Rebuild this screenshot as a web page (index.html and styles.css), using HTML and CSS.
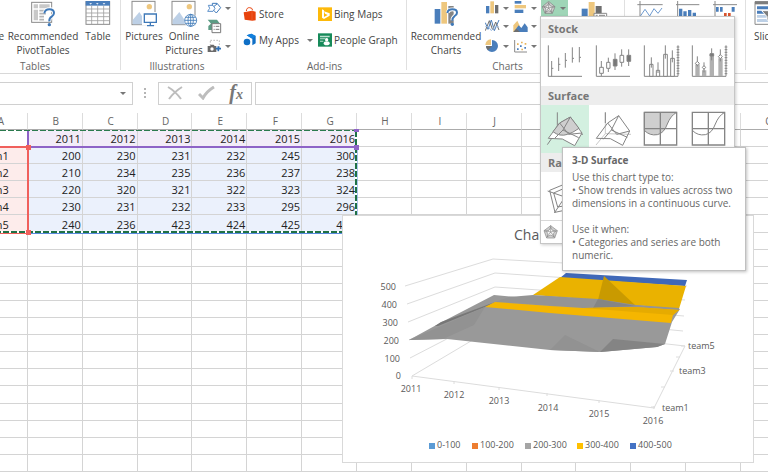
FILE: index.html
```html
<!DOCTYPE html>
<html lang="en">
<head>
    <meta charset="UTF-8">
    <meta name="viewport" content="width=device-width, initial-scale=1.0">
    <title>Workbook</title>
    <link rel="stylesheet" href="styles.css">
</head>
<body>
    <header class="ribbon">
        <section class="group tables">
            <div class="group-body">
                <button class="big pivot"><svg width="28" height="28"></svg>PivotTable</button>
                <button class="big wide">
                    <svg width="28" height="28" viewBox="92 0 84 84">
                        <rect x="100" y="7" width="60" height="60" fill="#fff" stroke="#8a8a8a" stroke-width="3"/>
                        <path d="M106 13h13v12h-13zM123 13h31v12h-31zM106 29h13v32h-13z" fill="#c8c8c8"/>
                        <path d="M123 32h24M123 41h20M123 50h14M123 59h14" stroke="#b5b5b5" stroke-width="5"/>
                        <path d="M139 39q3-11 15-11 13 0 13 11 0 6-7 11-8 5-7 13" fill="none" stroke="#fff" stroke-width="12"/>
                        <path d="M138 40q2-12 15-12 14 0 14 11 0 6-7 11-8 5-7 14" fill="none" stroke="#3f79b8" stroke-width="6"/>
                        <circle cx="153" cy="74" r="5" fill="#3f79b8"/>
                    </svg>
                    Recommended PivotTables
                </button>
                <button class="big narrow">
                    <svg width="28" height="28" viewBox="254 0 84 84">
                        <rect x="260" y="5" width="71" height="68" fill="#fff" stroke="#8a8a8a" stroke-width="3"/>
                        <path d="M259 3h73v14h-73z" fill="#4a7ebb"/>
                        <path d="M260 27h71M260 39h71M260 50h71M260 62h71M277 17v56M295 17v56M313 17v56" stroke="#a0a0a0" stroke-width="2.5"/>
                        <path d="M270 9l8 0-4 5zM290 9l8 0-4 5zM310 9l8 0-4 5z" fill="#dbe6f3"/>
                    </svg>
                    Table
                </button>
            </div>
            <h2>Tables</h2>
        </section>

        <section class="group illustrations">
            <div class="group-body">
                <button class="big">
                    <svg width="28" height="28" viewBox="391 0 84 84">
                        <rect x="397" y="4" width="69" height="70" fill="#fff" stroke="#8a8a8a" stroke-width="3"/>
                        <path d="M399 73V60l20-24 24 37z" fill="#bdd0e6"/>
                        <circle cx="449" cy="20" r="8" fill="#eec77e"/>
                        <path d="M427 36h48v40h-48z" fill="#fff"/>
                        <path d="M434 42h36v25h-36zM452 68v8M442 77h21" fill="#fff" stroke="#3f79b8" stroke-width="4"/>
                    </svg>
                    Pictures
                </button>
                <button class="big">
                    <svg width="28" height="28" viewBox="512 0 84 84">
                        <rect x="518" y="4" width="69" height="70" fill="#fff" stroke="#8a8a8a" stroke-width="3"/>
                        <path d="M520 73V60l20-24 24 37z" fill="#bdd0e6"/>
                        <circle cx="570" cy="20" r="8" fill="#eec77e"/>
                        <circle cx="574" cy="61" r="20" fill="#fff"/>
                        <g fill="none" stroke="#3f79b8" stroke-width="2.5">
                            <circle cx="574" cy="61" r="18"/>
                            <ellipse cx="574" cy="61" rx="8" ry="18"/>
                            <path d="M574 43v36M556 61h36M559 52h30M559 70h30"/>
                        </g>
                    </svg>
                    Online Pictures
                </button>
                <div class="stack">
                    <button class="small" aria-label="Shapes">
                        <svg width="15" height="13" viewBox="620 0 45 39">
                            <path d="M636 4h14v12h-14z" fill="#fff" stroke="#3f79b8" stroke-width="3"/>
                            <path d="M651 5l10 12-13 16-14-14z" fill="#fff" stroke="#3f79b8" stroke-width="3"/>
                            <path d="M624 10h14l6 9-6 9h-16l6-9z" fill="#fff" stroke="#5b8fc9" stroke-width="3"/>
                        </svg>
                        <i class="caret"></i>
                    </button>
                    <button class="small" aria-label="SmartArt">
                        <svg width="15" height="15" viewBox="620 55 45 45">
                            <path d="M622 57h28l9 12h-24v19h-11V76l8-7z" fill="#5c9c84"/>
                            <path d="M635 69h26v27h-26z" fill="#fff" stroke="#7a7a7a" stroke-width="3"/>
                            <path d="M640 77h3M646 77h11M640 86h3M646 86h11" stroke="#7a7a7a" stroke-width="3"/>
                        </svg>
                    </button>
                    <button class="small" aria-label="Screenshot">
                        <svg width="15" height="14" viewBox="620 120 45 42">
                            <path d="M630 124h27v26h-27z" fill="none" stroke="#9a9a9a" stroke-width="2" stroke-dasharray="5 4"/>
                            <path d="M622 141h7l3-4h8l3 4h5v18h-26z" fill="#6a6a6a"/>
                            <circle cx="635" cy="150" r="5" fill="#fff"/>
                            <path d="M654 142v15M646 149h16" stroke="#2e6fb5" stroke-width="5"/>
                        </svg>
                        <i class="caret"></i>
                    </button>
                </div>
            </div>
            <h2>Illustrations</h2>
        </section>

        <section class="group addins">
            <div class="group-body addin-grid">
                <button class="addin">
                    <svg width="14" height="14" viewBox="40 17 42 42">
                        <path d="M50 29q1-11 10-10 8 0 9 8" fill="none" stroke="#e8430c" stroke-width="3"/>
                        <path d="M42 33l25-5 11 3v26l-10 1-23-3z" fill="#e8430c"/>
                        <path d="M67 28v30" stroke="#f38a66"/>
                    </svg>
                    Store
                </button>
                <button class="addin">
                    <svg width="14" height="14" viewBox="267 17 42 42">
                        <path d="M267 18h42v41h-42z" fill="#fdb90a"/>
                        <path d="M279 24l6 3v20l11-6-8-4-3-7 17 6v7l-17 10-6-4z" fill="#fff"/>
                    </svg>
                    Bing Maps
                </button>
                <button class="addin">
                    <svg width="14" height="14" viewBox="40 99 42 42">
                        <path d="M51 106l14-5 13 7v22l-10 6V116z" fill="#0f6fc6"/>
                        <path d="M51 106l14-5 13 7-10 8z" fill="#1280de"/>
                        <circle cx="52" cy="126" r="10" fill="#0f6fc6"/>
                        <path d="M62 117q6 8 0 18" fill="none" stroke="#fff" stroke-width="2"/>
                    </svg>
                    My Apps
                    <i class="caret"></i>
                </button>
                <button class="addin">
                    <svg width="14" height="14" viewBox="267 98 42 42">
                        <path d="M267 99h42v40h-42z" fill="#178a5a"/>
                        <path d="M273 106h29v5h-29zM273 114h16v3h-16zM273 121h10v3h-10z" fill="#bfe0d1"/>
                        <circle cx="293" cy="118" r="5" fill="#fff"/>
                        <ellipse cx="293" cy="129" rx="9" ry="6" fill="#fff"/>
                    </svg>
                    People Graph
                </button>
            </div>
            <h2>Add-ins</h2>
        </section>

        <section class="group charts">
            <div class="group-body">
                <button class="big wide">
                    <svg width="28" height="28" viewBox="612 0 84 84">
                        <path d="M620 27h17v44h-17z" fill="#4a7ebb"/>
                        <path d="M640 6h17v65h-17z" fill="#eec77e"/>
                        <path d="M661 18h16v53h-16z" fill="#848484"/>
                        <path d="M659 38q2-10 14-10 13 0 13 10 0 6-6 10-7 5-7 13" fill="none" stroke="#fff" stroke-width="11"/>
                        <path d="M658 39q2-11 15-11 14 0 14 10 0 6-7 10-7 5-7 14" fill="none" stroke="#3f79b8" stroke-width="6"/>
                        <circle cx="673" cy="73" r="5" fill="#3f79b8"/>
                    </svg>
                    Recommended Charts
                </button>
                <div class="stack chart-col">
                    <button class="small" aria-label="Column chart">
                        <svg width="15" height="14" viewBox="18 -3 45 42">
                            <path d="M21 12h10v22H21z" fill="#4a7ebb"/><path d="M34-2h11v36H34z" fill="#eec77e"/><path d="M48 9h10v25H48z" fill="#6e6e6e"/>
                        </svg>
                        <i class="caret"></i>
                    </button>
                    <button class="small" aria-label="Line chart">
                        <svg width="15" height="14" viewBox="18 57 45 42" fill="none" stroke-width="3">
                            <path d="M19 68l8 20 10-28 9 32 14-32" stroke="#4a7ebb"/><path d="M19 92l12-30 10 28 9-24 10 24" stroke="#6e6e6e"/><path d="M19 80l9 0 9 12 12-14 11 3" stroke="#9dbbe0"/>
                        </svg>
                        <i class="caret"></i>
                    </button>
                    <button class="small" aria-label="Pie chart">
                        <svg width="15" height="14" viewBox="18 114 45 42">
                            <path d="M39 117a18 18 0 1 1-18 18h18z" fill="#4a7ebb"/><path d="M36 132H19q1-15 17-17z" fill="#eec77e"/><path d="M39 135H21q0 8 6 13z" fill="#6e6e6e"/>
                        </svg>
                        <i class="caret"></i>
                    </button>
                </div>
                <div class="stack chart-col">
                    <button class="small" aria-label="Bar chart">
                        <svg width="15" height="14" viewBox="102 -3 45 42">
                            <path d="M107-3h20v8h-20z" fill="#4a7ebb"/><path d="M107 9h34v10h-34z" fill="#eec77e"/><path d="M107 23h26v10h-26z" fill="#4a7ebb"/>
                        </svg>
                        <i class="caret"></i>
                    </button>
                    <button class="small" aria-label="Area chart">
                        <svg width="15" height="14" viewBox="102 57 45 42">
                            <path d="M103 96V76l12-14 16 34z" fill="#eec77e"/><path d="M104 96l15-20 8 8 10-14 9 12v14z" fill="#4a7ebb"/><path d="M103 96l9-10 11 10z" fill="#6e6e6e"/>
                        </svg>
                        <i class="caret"></i>
                    </button>
                    <button class="small" aria-label="Scatter chart">
                        <svg width="15" height="14" viewBox="102 114 45 42">
                            <path d="M107 117v36h37" fill="none" stroke="#8a8a8a" stroke-width="3"/><path d="M114 142h5v5h-5zM123 133h5v5h-5zM136 138h5v5h-5z" fill="#4a7ebb"/><path d="M114 127h5v5h-5zM126 122h5v5h-5zM137 126h5v5h-5zM127 143h5v5h-5z" fill="#e8b45a"/>
                        </svg>
                        <i class="caret"></i>
                    </button>
                </div>
                <div class="dropdown">
                    <button class="small open" aria-label="Stock, surface or radar chart">
                        <svg width="16" height="14" viewBox="186 -3 48 42" stroke="#7d7d7d" stroke-width="2">
                            <path d="M209-2l19 16-8 20h-22l-8-20z" fill="#cfcfcf"/><path d="M209 3l5 9 10 2-7 7 2 10-10-5-10 5 2-10-7-7 10-2z" fill="#f2f2f2"/><path d="M209 0v18l19-4M209 18l11 16M209 18l-11 16M209 18l-19-4" fill="none"/>
                        </svg>
                        <i class="caret"></i>
                    </button>

                    <div class="menu">
                        <h3>Stock</h3>
                        <div class="menu-row">
                            <button aria-label="High-Low-Close">
                                <svg viewBox="18 69 144 144"><path d="M40 91v93h101M50 138v46M71 128v40M91 114v44M112 97v46M133 96v46M50 160h5M71 148h5M91 136h5M112 130h5M133 127h5"/></svg>
                            </button>
                            <button aria-label="Open-High-Low-Close">
                                <svg viewBox="162 69 144 144"><path d="M184 91v93h101M199 138v18M199 175v8M220 128v14M220 161v10M240 115v50M260 103v18M260 142v13M281 103v50"/><path class="hollow" d="M194 157h11v18h-11zM215 142h10v18h-10zM255 121h11v21h-11z"/><path class="solid" d="M235 133h11v20h-11zM276 121h11v18h-11z"/></svg>
                            </button>
                            <button aria-label="Volume-High-Low-Close">
                                <svg viewBox="306 69 144 144"><path d="M328 91v93h101"/><path d="M429 91v93M425 96h8M425 104h8M425 112h8M425 120h8M425 128h8M425 136h8M425 144h8M425 152h8M425 160h8M425 168h8M425 176h8"/><path class="hollow" d="M344 148h10v36h-10zM364 166h10v18h-10zM386 118h11v66h-11zM407 130h11v54h-11z"/><path d="M349 127v31M369 142v32M391 91v40M412 106v36"/></svg>
                            </button>
                            <button aria-label="Volume-Open-High-Low-Close">
                                <svg viewBox="450 69 144 144"><path d="M472 91v93h101M573 91v93M569 96h8M569 104h8M569 112h8M569 120h8M569 128h8M569 136h8M569 144h8M569 152h8M569 160h8M569 168h8M569 176h8"/><path class="bar" d="M481 148h13v36h-13zM501 166h13v18h-13zM524 118h13v66h-13zM550 130h13v54h-13z"/><path d="M487 124v30M507 142v30M530 100v36M556 103v36"/><path class="hollow" d="M487 139l6 6-6 6-6-6zM507 152l5 5-5 6-5-6zM556 119l6 6-6 6-6-6z"/><path class="solid" d="M525 116h11v7h-11z"/></svg>
                            </button>
                        </div>
                        <h3>Surface</h3>
                        <div class="menu-row">
                            <button class="selected" aria-label="3-D Surface">
                                <svg viewBox="18 270 144 144"><path d="M67 292v54l-30 43M67 346l77 12"/><path class="hollow" d="M40 370l34-46 32-18 35 48-22 38-37-20z"/><path class="shade" d="M54 350l20-26 32-18 26 34q-20 14-34 18-24 8-44-8z"/><path d="M74 324l27 34 40-4M106 306L84 345l-24 24M84 345l47 23"/></svg>
                            </button>
                            <button aria-label="Wireframe 3-D Surface">
                                <svg viewBox="162 270 144 144"><path class="faint" d="M211 292v64l-28 34M211 356l77 2"/><path d="M211 292v32"/><path d="M184 370l34-46 33-22 33 46-21 43-37-20zM218 324l27 34 39-10M251 302l-22 43-24 28M229 345l48 22"/></svg>
                            </button>
                            <button aria-label="Contour">
                                <svg viewBox="306 270 144 144"><path class="shade" d="M328 292h97q-18 10-28 35-10 28-30 32-23 4-39-13z"/><path class="frame" d="M328 292h97v98h-97zM376 292v98M328 341h97"/></svg>
                            </button>
                            <button aria-label="Wireframe Contour">
                                <svg viewBox="450 270 144 144"><path d="M569 292q-18 10-28 35-10 28-30 32-23 4-39-13"/><path class="frame" d="M472 292h97v98h-97zM520 292v98M472 341h97"/></svg>
                            </button>
                        </div>
                        <h3>Radar</h3>
                        <div class="menu-row">
                            <button aria-label="Radar">
                                <svg viewBox="18 99 144 144"><path d="M92 134l50 24-16 48-66 14-16-66zM92 146l34 16-12 34-46 8-12-42zM90 134v40l50-16M90 174l34 32M90 174l-32 48M90 174l-52-18"/></svg>
                            </button>
                        </div>
                        <button class="more" aria-label="More charts">
                            <svg class="radar-mark" width="16" height="16" viewBox="24 254 48 48"><path class="shade" d="M47 259l20 15-8 22H35l-8-22z"/><path class="hollow" d="M47 264l5 9 10 2-7 7 2 10-10-5-10 5 2-10-7-7 10-2z"/><path d="M47 258v20l20-4M47 278l12 17M47 278l-12 17M47 278l-20-4"/></svg>
                        </button>
                        <div class="tooltip" role="tooltip">
                            <strong>3-D Surface</strong>
                            <p>Use this chart type to:<br>• Show trends in values across two dimensions in a continuous curve.</p>
                            <p>Use it when:<br>• Categories and series are both numeric.</p>
                        </div>
                    </div>
                </div>
                <button class="big pivot-chart" aria-label="PivotChart">
                    <svg width="28" height="28" viewBox="304 0 84 84">
                        <path d="M306 26h18v40h-18z" fill="#4a7ebb"/><path d="M327 6h18v60h-18z" fill="#eec77e"/><path d="M348 18h18v48h-18z" fill="#6e6e6e"/>
                        <path d="M343 40h38v34h-38z" fill="#fff" stroke="#8a8a8a" stroke-width="3"/>
                        <path d="M348 46h6M358 46h18" stroke="#8a8a8a" stroke-width="3"/>
                    </svg>
                </button>
            </div>
            <h2>Charts</h2>
        </section>

        <section class="group sparklines">
            <div class="group-body">
                <button class="big" aria-label="Line sparkline">
                    <svg width="28" height="28" viewBox="458 0 84 84" fill="none" stroke-width="3">
                        <path d="M462 14h76M470 3v75" stroke="#8a8a8a"/><path d="M470 50l15-22 14 20 13-22 12 14 12-16" stroke="#6f9bd0"/>
                    </svg>
                </button>
                <button class="big" aria-label="Column sparkline">
                    <svg width="28" height="28" viewBox="577 0 84 84">
                        <path d="M583 14h70M588 3v75" stroke="#8a8a8a" stroke-width="3"/><path d="M592 26h10v40h-10zM605 34h10v32h-10zM619 30h10v36h-10zM633 38h10v28h-10z" fill="#4a7ebb"/>
                    </svg>
                </button>
                <button class="big" aria-label="Win/loss sparkline">
                    <svg width="28" height="28" viewBox="693 0 84 84">
                        <path d="M696 14h72M702 3v75" stroke="#8a8a8a" stroke-width="3"/><path d="M705 21h8v14h-8zM717 21h8v14h-8zM752 21h9v14h-9z" fill="#4a7ebb"/><path d="M729 39h8v12h-8zM741 39h8v12h-8z" fill="#d9552f"/>
                    </svg>
                </button>
            </div>
        </section>

        <section class="group filters">
            <div class="group-body">
                <button class="big slicer">
                    <svg width="28" height="28" viewBox="825 0 84 84">
                        <path d="M828 5h66v68h-66z" fill="#fff" stroke="#8a8a8a" stroke-width="3"/><path d="M828 4h66v9h-66z" fill="#7d7d7d"/><path d="M834 19h54v9h-54zM834 32h54v9h-54z" fill="#4a7ebb"/><path d="M834 45h54v8h-54zM834 57h54v9h-54z" fill="#bdd0e6"/><path d="M848 32h40l-15 18v16l-9-7V50z" fill="#7d7d7d" stroke="#fff" stroke-width="3"/>
                    </svg>
                    Slicer
                </button>
            </div>
        </section>
    </header>

    <div class="formula-bar">
        <div class="name-box"><i class="caret"></i></div>
        <svg class="grip" width="3" height="10" viewBox="0 0 3 10"><path d="M0 0h2v2H0zM0 4h2v2H0zM0 8h2v2H0z" fill="#b5b5b5"/></svg>
        <div class="formula-tools">
            <button aria-label="Cancel"><svg width="16" height="14" viewBox="0 0 16 14"><path d="M1 1q7 4 13 12M15 1Q7 6 2 13" fill="none" stroke="#bdbdbd" stroke-width="2"/></svg></button>
            <button aria-label="Enter"><svg width="17" height="14" viewBox="0 0 17 14"><path d="M1 8l4 4Q9 5 16 1" fill="none" stroke="#bdbdbd" stroke-width="3"/></svg></button>
            <button class="fx" aria-label="Insert function">f<sub>x</sub></button>
        </div>
        <input class="formula" type="text" aria-label="Formula">
    </div>

    <main class="sheet">
        <table class="grid" id="grid"></table>

        <!-- coloured ranges of the selected chart and the copy marquee -->
        <svg class="ranges" width="362" height="124" viewBox="0 113 362 124">
            <path d="M28 233.5h329V148" fill="none" stroke="#5b8be0"/>
            <path d="M28 147V131M28 147h329" fill="none" stroke="#8e63c7" stroke-width="2"/>
            <path d="M0 147h28v86H0" fill="none" stroke="#f0605c" stroke-width="2"/>
            <path d="M0 130.500h356" fill="none" stroke="#2b7a4d" stroke-dasharray="6 2"/>
            <path d="M356 131v101H0" fill="none" stroke="#fff" stroke-width="2"/>
            <path d="M356 131v101H0" fill="none" stroke="#1f7145" stroke-width="2" stroke-dasharray="6 2"/>
            <path d="M354 129h5v3h-5zM354 145h5v5h-5z" fill="#8e63c7"/>
            <path d="M26 145h5v5h-5zM26 230h5v5h-5z" fill="#f0605c"/>
        </svg>

        <svg class="chart" width="412" height="248" viewBox="342 215 412 248" role="img" aria-label="Surface chart of team results, 2011 to 2016">
            <rect x="342.500" y="215.500" width="411" height="247" fill="#fff" stroke="#d9d9d9"/>
            <text class="chart-title" x="514" y="240">Chart Title</text>
            <g fill="none" stroke="#dcdcdc">
                <path d="M405 286l88-27 194 11M407 304l88-31 192 13M408 322l87-35 190 13M409 340l87-39 188 15M410 358l87-45 186 18M412 376l86-51 187 21"/>
                <path d="M412 376l242 32 31-62M412 376v3M454 381v3M499 387v3M547 393v3M599 400v3M654 406v3M651 407h4M661 387h4M670 371h4M676 357h4M681 346h4"/>
            </g>
            <path d="M409 340l31-17 54-28 34 3 22-2 130 13-8 13-7 22-8 3-56 5-51-2-103-11z" fill="#999"/>
            <path d="M495 302l-10 5-15 6-32 13-3 0 6-4z" fill="#777"/>
            <path d="M566 273l121 7-2 6-125-8z" fill="#3f68b8"/>
            <path d="M560 277l126 9-7 23-44-4-37-5-65-5z" fill="#eab200"/>
            <path d="M604 276l32 30-38-6z" fill="#c99a00"/>
            <path d="M533 295l65 4 38 6 43 3v2l-96-2-55-4-33-2 14-5z" fill="#949494"/>
            <path d="M598 299l38 7-43 2z" fill="#858585"/>
            <path d="M495 302l55 4 33 2 52-1 44 3-6 5-2 8-121-10-65-6z" fill="#f5b600"/>
            <path d="M583 308l52-1 44 3-6 5z" fill="#e6ab00"/>
            <path d="M485 307l-11 18-31 14-34 1z" fill="#929292"/>
            <path d="M565 335l35 17-50-2z" fill="#929292"/>
            <path d="M613 339l-13 13 57-5 8-3z" fill="#848484"/>
            <g class="axis end">
                <text x="396" y="290">500</text>
                <text x="397" y="308">400</text>
                <text x="398" y="326">300</text>
                <text x="399" y="344">200</text>
                <text x="400" y="362">100</text>
                <text x="401" y="379">0</text>
            </g>
            <g class="axis middle">
                <text x="411" y="392">2011</text>
                <text x="454" y="398">2012</text>
                <text x="499" y="404">2013</text>
                <text x="548" y="411">2014</text>
                <text x="599" y="417">2015</text>
                <text x="653" y="424">2016</text>
            </g>
            <g class="axis">
                <text x="688" y="349">team5</text>
                <text x="679" y="374">team3</text>
                <text x="662" y="411">team1</text>
            </g>
            <g class="axis">
                <path d="M429 443h6v6h-6z" fill="#5b9bd5"/><text x="437" y="448">0-100</text>
                <path d="M472 443h6v6h-6z" fill="#ed7d31"/><text x="480" y="448">100-200</text>
                <path d="M525 443h6v6h-6z" fill="#a5a5a5"/><text x="533" y="448">200-300</text>
                <path d="M577 443h6v6h-6z" fill="#ffc000"/><text x="585" y="448">300-400</text>
                <path d="M630 443h6v6h-6z" fill="#4472c4"/><text x="638" y="448">400-500</text>
            </g>
        </svg>
    </main>

    <script src="sheet.js"></script>
</body>
</html>
```
FILE: styles.css
```css
* {
    box-sizing: border-box;
}
body {
    margin: 0;
    height: 100vh;
    display: flex;
    flex-direction: column;
    overflow: hidden;
    background-color: #fff;
    color: #444;
    font-family: "Open Sans", "Noto Sans", sans-serif;
    font-size: 10px;
}
button {
    border: none;
    background: none;
    padding: 0;
    margin: 0;
    font: inherit;
    color: inherit;
    cursor: pointer;
}
h2, h3, p {
    margin: 0;
    font-size: 10px;
}
svg {
    display: block;
    flex: none;
}
.caret {
    border: 3px solid transparent;
    border-top: 3px solid #777;
    border-bottom: none;
}

/* ribbon */
.ribbon {
    display: flex;
    height: 74px;
    flex: none;
    border-bottom: 1px solid #d8d8d8;
}
.group {
    display: flex;
    flex-direction: column;
    flex: none;
    height: 70px;
    border-right: 1px solid #e0e0e0;
}
.group h2 {
    height: 11px;
    line-height: 14px;
    font-weight: normal;
    text-align: center;
    color: #666;
}
.group-body {
    display: flex;
    height: 59px;
}
.big {
    display: flex;
    flex-direction: column;
    align-items: center;
    gap: 1px;
    width: 40px;
    line-height: 14px;
}
.pivot {
    width: 54px;
    align-items: flex-end;
}
.wide {
    width: 78px;
}
.narrow {
    width: 32px;
}
.tables {
    width: 171px;
    margin-left: -50px;
}
.illustrations {
    width: 116px;
    padding-left: 3px;
}
.illustrations h2 {
    padding-right: 6px;
}
.stack {
    display: flex;
    flex-direction: column;
}
.small {
    display: flex;
    align-items: center;
    gap: 3px;
    height: 20px;
}
.illustrations .stack {
    padding-left: 3px;
}
.stack .small:first-child {
    height: 16px;
}
.addins {
    width: 170px;
    padding-left: 6px;
}
.addin-grid {
    display: grid;
    grid-template-columns: 75px 1fr;
    grid-template-rows: 27px 26px;
}
.addin {
    display: flex;
    align-items: center;
    gap: 2px;
    white-space: nowrap;
}
.addin .caret {
    margin-left: 6px;
}
.charts {
    width: 218px;
}
.charts h2 {
    padding-right: 16px;
}
.chart-col {
    width: 28px;
}
.dropdown {
    position: relative;
    width: 27px;
}
.open {
    width: 27px;
    height: 16px;
    background-color: #9fd5b7;
}
.pivot-chart {
    margin-left: 7px;
}
.sparklines {
    width: 121px;
    padding-left: 6px;
}
.filters {
    border-right: none;
    padding-left: 8px;
}
.slicer {
    align-items: flex-start;
}

/* chart type menu */
.menu {
    position: absolute;
    top: 16px;
    left: -1px;
    z-index: 2;
    width: 195px;
    padding-top: 2px;
    border: 1px solid #c6c6c6;
    background-color: #fff;
    box-shadow: 1px 1px 3px rgba(0, 0, 0, 0.2);
}
.menu h3 {
    height: 19px;
    padding-left: 7px;
    line-height: 19px;
    background-color: #ededed;
    color: #777;
    font-size: 11px;
}
.menu-row {
    display: flex;
}
.menu-row button {
    width: 48px;
    height: 48px;
}
.menu svg {
    fill: none;
    stroke: #858585;
    stroke-width: 3;
}
.menu .hollow {
    fill: #fff;
}
.menu .solid {
    fill: #777;
}
.menu .bar {
    fill: #b0b0b0;
    stroke: none;
}
.menu .shade {
    fill: #cfcfcf;
}
.menu .faint {
    stroke: #c8c8c8;
}
.menu .frame {
    stroke-width: 4;
}
.menu .radar-mark {
    stroke-width: 2;
}
.menu .selected {
    background-color: #d3f0e0;
}
.more {
    display: flex;
    align-items: center;
    width: 100%;
    height: 23px;
    padding-left: 2px;
    border-top: 1px solid #d8d8d8;
}
.tooltip {
    position: absolute;
    top: 130px;
    left: 21px;
    width: 184px;
    padding: 6px 9px 8px;
    border: 1px solid #c0c0c0;
    background-color: #fff;
    box-shadow: 1px 1px 3px rgba(0, 0, 0, 0.25);
    color: #666;
    line-height: 13px;
}
.tooltip strong {
    display: block;
    margin-bottom: 4px;
}
.tooltip p + p {
    margin-top: 13px;
}

/* formula bar */
.formula-bar {
    display: flex;
    align-items: center;
    flex: none;
    height: 22px;
    margin: 8px 0 9px;
}
.name-box {
    display: flex;
    align-items: center;
    justify-content: flex-end;
    width: 133px;
    height: 23px;
    padding-right: 6px;
    border: 1px solid #d0d0d0;
    border-left: none;
}
.grip {
    margin: 0 11px;
}
.formula-tools {
    display: flex;
    align-items: center;
    justify-content: space-between;
    width: 94px;
    height: 23px;
    padding: 0 8px;
    border: 1px solid #d0d0d0;
}
.fx {
    font-family: "Liberation Serif", serif;
    font-style: italic;
    font-weight: bold;
    font-size: 20px;
    line-height: 20px;
    color: #777;
}
.fx sub {
    font-size: 14px;
    vertical-align: baseline;
}
.formula {
    flex: 1;
    min-width: 0;
    height: 23px;
    margin-left: 3px;
    border: 1px solid #d0d0d0;
    border-right: none;
}

/* sheet */
.sheet {
    position: relative;
    flex: 1;
    min-height: 0;
}
.grid {
    width: calc(100% + 55px);
    height: 100%;
    margin-left: -27px;
    border-collapse: separate;
    border-spacing: 0;
    table-layout: fixed;
    line-height: 14px;
}
.grid th {
    height: 17px;
    padding: 0 0 0 2px;
    border-right: 1px solid #dcdcdc;
    border-bottom: 1px solid #ababab;
    font-weight: normal;
    color: #666;
}
.grid td {
    height: 17px;
    padding: 2px 1px 0;
    border-right: 1px solid #d4d4d4;
    border-bottom: 1px solid #d4d4d4;
    font-size: 11px;
    color: #222;
    text-align: right;
}
.grid .team {
    padding-left: 3px;
    background-color: #fdeceb;
    text-align: left;
}
.grid .year {
    background-color: #f2ecf8;
}
.grid .value {
    background-color: #ebf1fc;
}
.ranges {
    position: absolute;
    top: 0;
    left: 0;
}
.chart {
    position: absolute;
    top: 102px;
    left: 342px;
}
.chart text {
    fill: #595959;
}
.chart .chart-title {
    font-size: 14px;
}
.axis {
    font-size: 9px;
}
.end {
    text-anchor: end;
}
.middle {
    text-anchor: middle;
}
```
FILE: sheet.js
```js
const columns = "ABCDEFGHIJKLMNO".split("");
const rowCount = 20;

const data = [
    ["", 2011, 2012, 2013, 2014, 2015, 2016],
    ["team1", 200, 230, 231, 232, 245, 300],
    ["team2", 210, 234, 235, 236, 237, 238],
    ["team3", 220, 320, 321, 322, 323, 324],
    ["team4", 230, 231, 232, 233, 295, 296],
    ["team5", 240, 236, 423, 424, 425, 426]
];

const grid = document.getElementById("grid");

const head = grid.createTHead().insertRow();
columns.forEach(name => {
    const th = document.createElement("th");
    th.textContent = name;
    head.appendChild(th);
});

const body = grid.createTBody();
for (let r = 0; r < rowCount; r++) {
    const row = body.insertRow();
    columns.forEach((name, c) => {
        const cell = row.insertCell();
        if (!data[r] || data[r][c] === undefined) return;
        cell.textContent = data[r][c];
        if (r === 0 && c > 0) cell.className = "year";
        if (r > 0) cell.className = c === 0 ? "team" : "value";
    });
}
```
